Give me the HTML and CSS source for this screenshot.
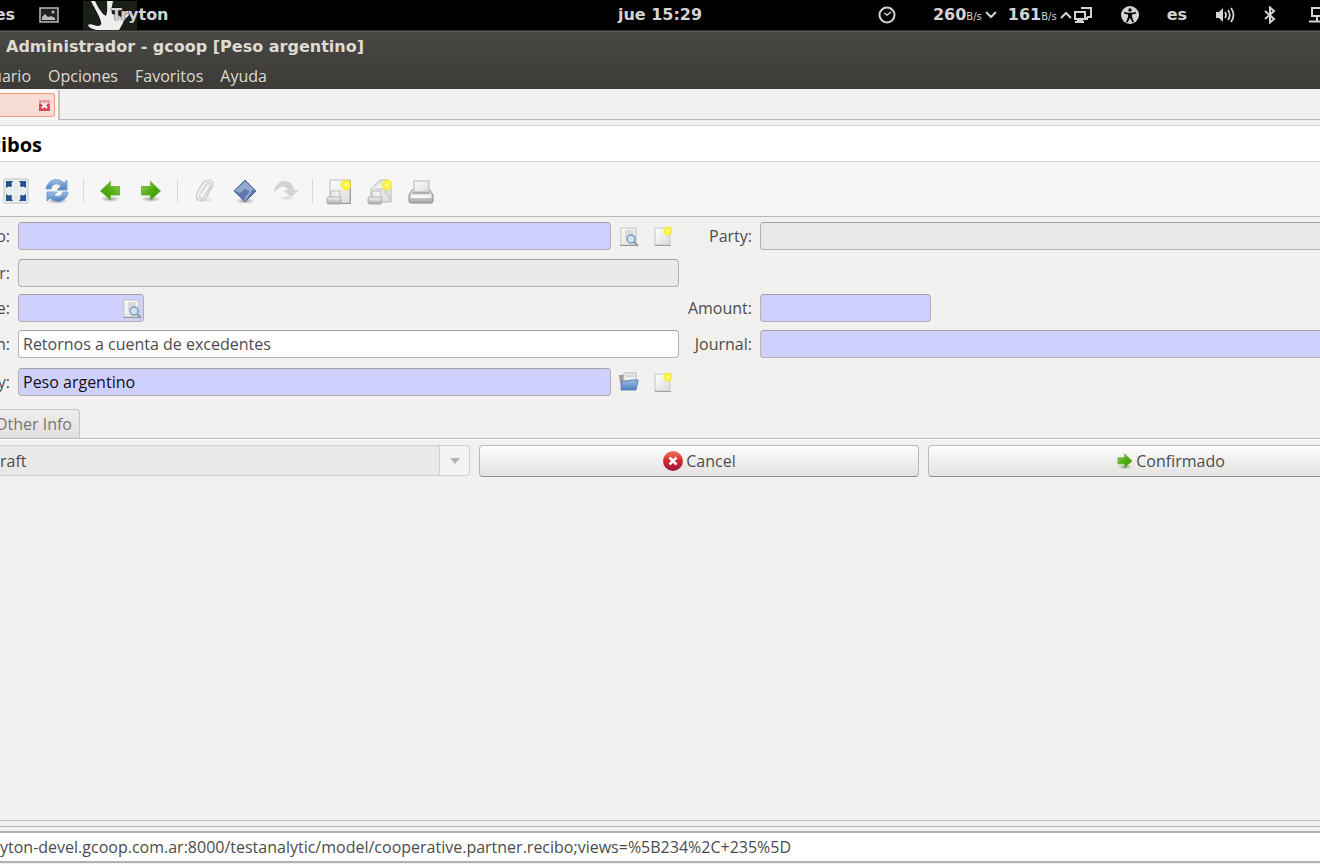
FILE: index.html
```html
<!DOCTYPE html>
<html lang="es">
<head>
    <meta charset="UTF-8">
    <meta name="viewport" content="width=device-width, initial-scale=1.0">
    <title>Tryton</title>
    <link rel="stylesheet" href="styles.css">
</head>
<body>

<!-- Shared icons -->
<svg class="defs" width="0" height="0">
    <defs>
        <linearGradient id="green" x1="0" y1="0" x2="1" y2="1">
            <stop offset="0" stop-color="#9bd45c"/><stop offset="0.5" stop-color="#4fae14"/><stop offset="1" stop-color="#3f8d0a"/>
        </linearGradient>
        <linearGradient id="paper" x1="0" y1="0" x2="1" y2="1">
            <stop offset="0" stop-color="#ffffff"/><stop offset="1" stop-color="#d9d9d7"/>
        </linearGradient>
        <linearGradient id="metal" x1="0" y1="0" x2="0" y2="1">
            <stop offset="0" stop-color="#fafafa"/><stop offset="1" stop-color="#a5a5a3"/>
        </linearGradient>
        <linearGradient id="blue" x1="0" y1="0" x2="0" y2="1">
            <stop offset="0" stop-color="#9cc0e6"/><stop offset="1" stop-color="#4a7fbd"/>
        </linearGradient>
        <linearGradient id="red" x1="0" y1="0" x2="0" y2="1">
            <stop offset="0" stop-color="#ef7a5c"/><stop offset="0.5" stop-color="#d02a32"/><stop offset="1" stop-color="#a01440"/>
        </linearGradient>
        <radialGradient id="shadow">
            <stop offset="0" stop-color="#000" stop-opacity="0.35"/><stop offset="1" stop-color="#000" stop-opacity="0"/>
        </radialGradient>
        <radialGradient id="spark">
            <stop offset="0" stop-color="#ffffc0"/><stop offset="0.35" stop-color="#fff45a"/><stop offset="0.75" stop-color="#fbf01a" stop-opacity="0.9"/><stop offset="1" stop-color="#fbf01a" stop-opacity="0"/>
        </radialGradient>
    </defs>
    <symbol id="arrow-right" viewBox="0 0 24 24">
        <ellipse cx="12" cy="20" rx="10" ry="3" fill="url(#shadow)"/>
        <path d="M2.5 7.500h9v-5l10 9.500-10 9v-5h-9z" fill="url(#green)" stroke="#6db33a"/>
    </symbol>
    <symbol id="new" viewBox="0 0 24 24">
        <rect x="5" y="4" width="15" height="17" fill="url(#paper)" stroke="#c8c8c6"/>
        <path d="M5 21.500h16" stroke="#a0a09e"/>
        <circle cx="18" cy="7" r="5" fill="url(#spark)"/>
    </symbol>
    <symbol id="find" viewBox="0 0 24 24">
        <rect x="5" y="4" width="15" height="17" fill="url(#paper)" stroke="#c2c2c0"/>
        <path d="M9 7h8M9 9h8M9 11h8M9 13h3" stroke="#c5c5c5"/>
        <path d="M4 21.500h16" stroke="#999"/>
        <circle cx="15" cy="15" r="4" fill="#cfe2f6" stroke="#7a9cc4" stroke-width="1.500"/>
        <path d="M18 18l4 4" stroke="#999" stroke-width="2"/>
    </symbol>
    <symbol id="net" viewBox="0 0 20 18">
        <path d="M8 2h10v9h-4M14 11v3" fill="none" stroke="currentColor" stroke-width="2"/>
        <rect x="2" y="6" width="10" height="7" fill="#000" stroke="currentColor" stroke-width="2"/>
        <path d="M4 13h6v2h1v2H2v-2h2z" fill="currentColor"/>
    </symbol>
</svg>

<header class="topbar">
    <div class="topbar-left">
        <span class="clip clip-lang">es</span>
        <svg class="pic" viewBox="0 0 20 18" width="20" height="18">
            <rect x="1" y="2" width="18" height="14" fill="#222" stroke="#bbb" stroke-width="1.5"/>
            <path d="M3 14v-3l3-3 3 3 3-1 4 2v2z" fill="#bbb"/><circle cx="14" cy="6" r="1.5" fill="#bbb"/>
        </svg>
        <div class="app">
            <svg viewBox="0 0 54 29" width="54" height="29">
                <rect width="54" height="29" fill="#1a1f18"/>
                <path d="M8 0h4c2 5 5 9 8 13l3 2c2-5 1-10 1-15h6c-1 5-2 9-1 13 3 1 7 1 9 3 3-3 5-5 8-4 1 2-1 3-3 5-3 3-4 8-7 12H13c-3-1-7-2-8-5 2-2 6 0 9 1 3 0 5-1 4-4C16 13 11 7 8 0z" fill="#eee"/>
            </svg>
            <span>Tryton</span>
        </div>
    </div>
    <time>jue 15:29</time>
    <div class="topbar-right">
        <svg viewBox="0 0 18 18" width="18" height="18" fill="none" stroke="currentColor">
            <circle cx="9" cy="9" r="7.5" stroke-width="2"/><path d="M6 7l3 2 4-3" stroke-width="1.5"/>
        </svg>
        <div class="speed">
            <span>260<small>B/s</small></span>
            <svg viewBox="0 0 16 14" width="16" height="14" fill="none" stroke="currentColor" stroke-width="2"><path d="M4 4l5 5 5-5"/></svg>
            <span class="up">161<small>B/s</small></span>
            <svg viewBox="0 0 16 14" width="16" height="14" fill="none" stroke="currentColor" stroke-width="2"><path d="M4 10l5-5 5 5"/></svg>
            <svg width="20" height="18"><use href="#net"/></svg>
        </div>
        <svg viewBox="0 0 18 18" width="18" height="18">
            <circle cx="9" cy="9" r="9" fill="currentColor"/><circle cx="9" cy="4" r="1.7"/>
            <path d="M3 6l4 .8h4L15 6v1.6l-4 1V11l2 5-1.5.5L9 12l-2.500 4.500L5 16l2-5V8.600l-4-1z"/>
        </svg>
        <span>es</span>
        <svg viewBox="0 0 20 18" width="20" height="18" fill="none" stroke="currentColor" stroke-width="1.800">
            <path d="M1 6h3l4-4v14l-4-4H1z" fill="currentColor" stroke="none"/><path d="M10 6q2 3 0 6M13 4q3.500 5 0 10M16 2q5 7 0 14"/>
        </svg>
        <svg viewBox="0 0 14 18" width="14" height="18" fill="none" stroke="currentColor" stroke-width="2"><path d="M2 5l9 8-4 3.500v-15L11 5l-9 8"/></svg>
        <svg class="last" viewBox="0 0 11 18" width="11" height="18" fill="none" stroke="currentColor" stroke-width="2"><path d="M12 2H3v8h9M8 10v5M0 15.500h12"/></svg>
    </div>
</header>

<div class="window-head">
    <h1 class="clip">Administrador - gcoop [Peso argentino]</h1>
    <nav class="menu">
        <a class="clip" href="#">uario</a>
        <a href="#">Opciones</a>
        <a href="#">Favoritos</a>
        <a href="#">Ayuda</a>
    </nav>
</div>

<div class="tabs">
    <div class="tab">
        <div class="tab-label">
            <button class="close" aria-label="Cerrar">
                <svg viewBox="0 0 11 11" width="11" height="11"><rect width="11" height="11" fill="#d8485a"/><rect width="11" height="4" fill="#e59aa0"/><path d="M3 3l5 5M8 3l-5 5" stroke="#fff" stroke-width="2"/></svg>
            </button>
        </div>
    </div>
    <div class="tabs-rest"></div>
</div>

<h2 class="heading"><span class="clip">cibos</span></h2>

<div class="toolbar">
    <button aria-label="Pantalla completa">
        <svg viewBox="0 0 26 26" width="26" height="26">
            <rect x="1" y="1" width="24" height="24" rx="1" fill="#e9eeee" stroke="#bfc3c3"/>
            <path d="M3 3h7L8.500 5.500 9 8 8 9 5.500 8.500 3 10zM23 3v7l-2.500-1.500L18 9l-1-1 .5-2.500L16 3zM3 23v-7l2.500 1.500L8 17l1 1-.5 2.500L10 23zM23 23h-7l1.500-2.500L17 18l1-1 2.500.5L23 16z" fill="#23508f"/>
        </svg>
    </button>
    <button aria-label="Recargar">
        <svg viewBox="0 0 26 26" width="26" height="26">
            <ellipse cx="13" cy="23" rx="11" ry="3" fill="url(#shadow)"/>
            <path d="M2 11C3 1 15-1 20 5l3-3v10H13l4-4C13 4 8 6 7 11z" fill="url(#blue)" stroke="#7ba3d0"/>
            <path d="M24 14c-1 10-12 12-18 6l-3 3V14h10l-3 3c4 3 8 1 9-3z" fill="url(#blue)" stroke="#7ba3d0"/>
        </svg>
    </button>
    <i class="sep"></i>
    <button aria-label="Anterior"><svg class="flip" width="24" height="24"><use href="#arrow-right"/></svg></button>
    <button aria-label="Siguiente"><svg width="24" height="24"><use href="#arrow-right"/></svg></button>
    <i class="sep"></i>
    <button aria-label="Adjuntar" disabled>
        <svg viewBox="0 0 26 26" width="26" height="26" fill="none" stroke="#d2d2d0" stroke-width="1.600" stroke-linecap="round">
            <ellipse cx="14" cy="22" rx="10" ry="2" fill="url(#shadow)" stroke="none" opacity="0.4"/>
            <path d="M10 15l5-8c2-3 6-1 4 2l-6 10c-2 3-6 1-4-2M7 13l5-8c4-5 13-2 9 4l-6 11c-4 5-12 2-9-4z"/>
        </svg>
    </button>
    <button aria-label="Acciones">
        <svg viewBox="0 0 26 26" width="26" height="26">
            <ellipse cx="13" cy="23" rx="10" ry="3" fill="url(#shadow)"/>
            <path d="M13 2l11 11-11 11L2 13z" fill="#5e78ad" stroke="#566c98"/>
            <path d="M13 3l9 9-5 1-4-2-5 4-5-2z" fill="#92a9cd"/>
            <path d="M13 23c0-5 5-5 6-12" fill="none" stroke="#a3b5d5" stroke-width="1.500"/>
        </svg>
    </button>
    <button aria-label="Relacionar" disabled>
        <svg viewBox="0 0 26 26" width="26" height="26">
            <ellipse cx="14" cy="20" rx="9" ry="2" fill="url(#shadow)" opacity="0.4"/>
            <path d="M1 16C1 0 20-1 21 12h5l-8 7-8-7h5C13 7 5 7 1 16z" fill="#d3d4d1"/>
        </svg>
    </button>
    <i class="sep"></i>
    <button aria-label="Informe">
        <svg viewBox="0 0 26 28" width="26" height="28">
            <rect x="4" y="3" width="20" height="23" fill="url(#paper)" stroke="#b9b9b7"/>
            <path d="M24.500 4v22M13 26.500h12" stroke="#999"/>
            <rect x="5" y="14" width="9" height="7" fill="#eee" stroke="#bbb"/>
            <rect x="1" y="20" width="14" height="7" rx="2" fill="url(#metal)" stroke="#aaa"/>
            <circle cx="20" cy="8" r="6" fill="url(#spark)"/>
        </svg>
    </button>
    <button aria-label="Correo">
        <svg viewBox="0 0 26 28" width="26" height="28">
            <path d="M4 12l9-9h8l3 3v19H9l-5-3z" fill="url(#paper)" stroke="#b9b9b7"/>
            <path d="M6 12h11l7 12M17 16l7-5M8 10l7-6" fill="none" stroke="#c5c5c3"/>
            <rect x="5" y="14" width="9" height="7" fill="#eee" stroke="#bbb"/>
            <rect x="1" y="20" width="14" height="7" rx="2" fill="url(#metal)" stroke="#aaa"/>
            <circle cx="20" cy="8" r="6" fill="url(#spark)"/>
        </svg>
    </button>
    <button aria-label="Imprimir">
        <svg viewBox="0 0 26 28" width="26" height="28">
            <path d="M4 13h18l3 5v6q0 2-2 2H3q-2 0-2-2v-6z" fill="url(#metal)" stroke="#8c8c8a"/>
            <rect x="6" y="4" width="15" height="11" fill="url(#paper)" stroke="#b5b5b3"/>
            <path d="M4 16h18" stroke="#888"/>
            <rect x="3" y="18" width="20" height="3" rx="1" fill="#f6f6f6"/>
        </svg>
    </button>
</div>

<form class="record">
    <label class="clip" for="socio">o:</label>
    <div class="field">
        <input class="required" id="socio">
        <button type="button" aria-label="Buscar"><svg width="24" height="24"><use href="#find"/></svg></button>
        <button type="button" aria-label="Nuevo"><svg width="24" height="24"><use href="#new"/></svg></button>
    </div>
    <label for="party">Party:</label>
    <div class="field"><input class="cut" id="party" disabled></div>

    <label class="clip" for="number">r:</label>
    <div class="field"><input id="number" disabled></div>
    <span></span>
    <span></span>

    <label class="clip" for="date">e:</label>
    <div class="field">
        <div class="date required">
            <input id="date">
            <button type="button" aria-label="Calendario"><svg width="24" height="24"><use href="#find"/></svg></button>
        </div>
    </div>
    <label for="amount">Amount:</label>
    <div class="field"><input class="required amount" id="amount"></div>

    <label class="clip" for="description">n:</label>
    <div class="field"><input id="description" value="Retornos a cuenta de excedentes"></div>
    <label for="journal">Journal:</label>
    <div class="field"><input class="required cut" id="journal"></div>

    <label class="clip" for="currency">y:</label>
    <div class="field">
        <input class="required dark" id="currency" value="Peso argentino">
        <button type="button" aria-label="Abrir">
            <svg viewBox="0 0 24 24" width="24" height="24">
                <path d="M3 5h6l1-1h10v15H5z" fill="#9a9a98"/>
                <path d="M8 3h12v8H7z" fill="#eee" stroke="#bbb"/><path d="M10 6h8" stroke="#bbb"/>
                <path d="M6 11h7l2-1h7l-2 10H5z" fill="url(#blue)" stroke="#5482b8"/>
            </svg>
        </button>
        <button type="button" aria-label="Nuevo"><svg width="24" height="24"><use href="#new"/></svg></button>
    </div>
</form>

<div class="notebook">
    <button class="clip">Other Info</button>
</div>

<div class="state">
    <div class="combo">
        <select aria-label="Estado" disabled><option>raft</option></select>
        <span class="combo-arrow"></span>
    </div>
    <button class="action">
        <svg viewBox="0 0 22 22" width="22" height="22">
            <circle cx="11" cy="11" r="10" fill="url(#red)"/>
            <path d="M7.500 7.500l7 7M14.500 7.500l-7 7" stroke="#fff" stroke-width="2.500"/>
        </svg>
        Cancel
    </button>
    <button class="action wide">
        <svg width="18" height="18"><use href="#arrow-right"/></svg>
        Confirmado
    </button>
</div>

<footer class="statusbar">
    <input aria-label="URL" readonly value="yton-devel.gcoop.com.ar:8000/testanalytic/model/cooperative.partner.recibo;views=%5B234%2C+235%5D">
</footer>

</body>
</html>
```
FILE: styles.css
```css
:root {
    --bg: #f2f1f0;
    --text: #4c4c4c;
    --line: #bab8b5;
    --required: #d0d0ff;
    --font-ui: "Open Sans", "Noto Sans", sans-serif;
    --font-title: "DejaVu Sans", sans-serif;
}

* { margin: 0; padding: 0; box-sizing: border-box; }

body {
    min-height: 100vh;
    display: flex;
    flex-direction: column;
    overflow: hidden;
    background: var(--bg);
    color: var(--text);
    font: 16px/24px var(--font-ui);
}

button, input, select { font: inherit; color: inherit; }
button { border: 0; background: none; }
svg { display: block; flex: none; }
.defs { position: absolute; }

/* Text that runs out past the left edge */
.clip {
    display: flex;
    justify-content: flex-end;
    overflow: hidden;
    white-space: nowrap;
}

/* --- Desktop panel --- */
.topbar {
    height: 31px;
    display: flex;
    align-items: center;
    background: #000;
    border-bottom: 1px solid #30302c;
    color: #d3d3d3;
    font: bold 16px/28px var(--font-title);
}
.topbar-left, .topbar-right { flex: 1; display: flex; align-items: center; }
.topbar-left { gap: 24px; }
.clip-lang { width: 15px; }
.app { display: flex; align-items: center; }
.app span { margin-left: -26px; text-shadow: 0 0 2px #000; }
.topbar-right { justify-content: flex-end; gap: 28px; }
.topbar-right .last { margin-left: 4px; }
.speed { display: flex; align-items: center; margin-left: 9px; }
.speed small { font-size: 10px; font-weight: normal; line-height: 1; }
.speed .up { margin-left: 10px; }

/* --- Title bar and menu --- */
.window-head {
    height: 58px;
    background: linear-gradient(#484743, #3c3b37);
    border-top: 1px solid #5a5954;
    color: #dfdbd2;
}
.window-head h1 {
    width: 364px;
    font: bold 16px/29px var(--font-title);
}
.menu { display: flex; gap: 17px; line-height: 31px; }
.menu a { color: inherit; text-decoration: none; }
.menu .clip { width: 31px; }

/* --- Tabs --- */
.tabs { display: flex; height: 31px; }
.tab {
    width: 60px;
    padding: 4px 3px 0 0;
    background: #f9f9f8;
    border-right: 2px solid #c6c4c2;
    border-top-right-radius: 4px;
}
.tab-label {
    height: 24px;
    display: flex;
    align-items: center;
    justify-content: flex-end;
    padding-right: 4px;
    background: #f7ddd3;
    border: 1px solid #f29879;
    border-left: 0;
    border-radius: 0 3px 3px 0;
}
.tabs-rest { flex: 1; border-bottom: 1px solid var(--line); }

/* --- Heading --- */
.heading {
    margin-top: 5px;
    height: 37px;
    background: #fff;
    border-top: 1px solid #d5d3d1;
    border-bottom: 1px solid #d5d3d1;
    color: #000;
    font-size: 20px;
    line-height: 37px;
}
.heading .clip { width: 42px; }

/* --- Toolbar --- */
.toolbar {
    height: 55px;
    display: flex;
    align-items: center;
    padding: 4px 0 0 3px;
    gap: 15px;
    background: #f6f6f6;
    border-bottom: 1px solid var(--line);
}
.toolbar button { width: 26px; display: flex; justify-content: center; }
.sep { width: 1px; height: 24px; margin: 0 -2px; background: #d8d8d6; }
.flip { transform: scaleX(-1); }

/* --- Form --- */
.record {
    display: grid;
    grid-template-columns: 10px 661fr 65px 560fr;
    grid-template-rows: 38px 36px 34px 38px 38px;
    column-gap: 8px;
    align-items: center;
}
.record label { display: flex; justify-content: flex-end; }
.field { display: flex; align-items: center; min-width: 0; }
.field button { width: 34px; display: flex; justify-content: center; }
.field input, .date {
    flex: 1;
    min-width: 0;
    height: 28px;
    padding: 0 4px;
    background: #fff;
    border: 1px solid #b4b0ad;
    border-top-color: #a5a19e;
    border-radius: 4px;
}
.field input.required, .date.required { background: var(--required); }
.field input:disabled { background: #eae9e7; }
.field .dark { color: #111; }
.field .cut { border-right: 0; border-radius: 4px 0 0 4px; }
.field .amount { flex: none; width: 171px; }
.date { flex: none; display: flex; align-items: center; width: 126px; padding: 0; }
.field .date input { height: 100%; border: 0; background: none; }
.date button { width: 24px; }

/* --- Notebook --- */
.notebook { padding-top: 8px; display: flex; border-bottom: 1px solid var(--line); }
.notebook button {
    width: 80px;
    height: 29px;
    align-items: center;
    padding-right: 7px;
    background: linear-gradient(#efeeed, #e2e0de);
    border: 1px solid #c6c4c2;
    border-width: 1px 1px 0 0;
    border-radius: 0 4px 0 0;
    color: #77756f;
}

/* --- State row --- */
.state {
    display: grid;
    grid-template-columns: 470fr 440fr 392fr;
    column-gap: 9px;
    padding-top: 5px;
    border-top: 1px solid #fff;
}
.combo { display: flex; height: 31px; border: 1px solid #d3d1cf; border-left: 0; border-radius: 0 4px 4px 0; }
.combo select { flex: 1; appearance: none; border: 0; background: #eae9e7; opacity: 1; color: var(--text); }
.combo-arrow {
    width: 30px;
    display: flex;
    align-items: center;
    justify-content: center;
    border-left: 1px solid #d3d1cf;
    background: #f5f4f3;
    border-radius: 0 4px 4px 0;
}
.combo-arrow::before {
    content: "";
    border: 5px solid transparent;
    border-top: 6px solid #b5b3b0;
    border-bottom: 0;
}
.action {
    display: flex;
    align-items: center;
    justify-content: center;
    gap: 2px;
    height: 32px;
    background: linear-gradient(#fdfdfd, #e4e2e0);
    border: 1px solid #bbb8b5;
    border-bottom-color: #8f8c89;
    border-radius: 4px;
}
.wide { padding-left: 92px; border-right: 0; border-radius: 4px 0 0 4px; }

/* --- Status bar --- */
.statusbar {
    margin-top: auto;
    height: 44px;
    padding: 5px 0 1px;
    border-top: 1px solid var(--line);
}
.statusbar input {
    display: block;
    width: 100%;
    height: 32px;
    background: #fff;
    border: 1px solid #b4b0ad;
    border-width: 2px 0;
}
.statusbar::before {
    content: "";
    display: block;
    border-top: 1px solid var(--line);
    padding-top: 4px;
}
```
